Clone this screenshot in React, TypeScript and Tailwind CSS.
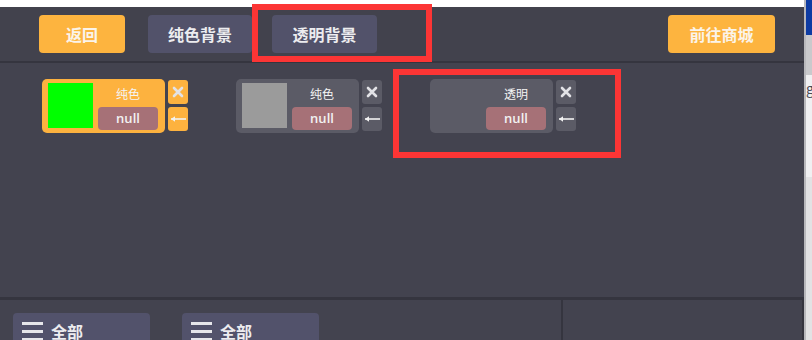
import React from "react";

const FONT = { fontFamily: '"Noto Sans CJK SC", "Noto Sans", sans-serif' };

function CloseIcon() {
  return (
    <svg width="12" height="12" viewBox="0 0 12 12">
      <path d="M2 2 L10 10 M10 2 L2 10" stroke="#e2e2e6" strokeWidth="2.6" strokeLinecap="round" />
    </svg>
  );
}

function ArrowIcon() {
  return (
    <svg width="16" height="8" viewBox="0 0 16 8">
      <path d="M1 4 L16 4" stroke="#f2f2f2" strokeWidth="1.6" />
      <path d="M1 4 L5 1.2 L5 6.8 Z" fill="#f2f2f2" />
    </svg>
  );
}

function Card({
  label,
  active,
  swatch,
}: {
  label: string;
  active?: boolean;
  swatch?: string;
}) {
  const bg = active ? "bg-[#fdb23f]" : "bg-[#5b5b66]";
  return (
    <div className="flex gap-[3px]">
      <div className={`flex h-[54px] w-[123px] rounded-[5px] ${bg} pl-[6px] pr-[7px]`}>
        {swatch ? (
          <div className="mt-[4px] h-[45px] w-[45px]" style={{ backgroundColor: swatch }} />
        ) : null}
        <div className="ml-auto flex w-[60px] flex-col items-center pt-[7px]">
          <div className="text-[12px] leading-[16px] text-[#f4f4f4]">{label}</div>
          <div
            className="mt-[5px] flex h-[23px] w-[60px] items-center justify-center rounded-[4px] bg-[#a67177] text-[13px] font-semibold text-[#f2f2f2]"
            style={{ fontFamily: '"Open Sans", "Noto Sans", sans-serif' }}
          >
            null
          </div>
        </div>
      </div>
      <div className="mt-[1px] flex flex-col gap-[3px]">
        <div className={`flex h-[24px] w-[20px] items-center justify-center rounded-[3px] ${bg}`}>
          <CloseIcon />
        </div>
        <div className={`flex h-[24px] w-[20px] items-center justify-center rounded-[3px] ${bg}`}>
          <ArrowIcon />
        </div>
      </div>
    </div>
  );
}

function MenuButton() {
  return (
    <div className="flex h-[40px] w-[137px] shrink-0 items-start rounded-t-[4px] bg-[#52526b] pl-[9px] pt-[9px]">
      <div className="flex w-[21px] flex-col gap-[5px]">
        <div className="h-[3px] bg-[#e6e6ea]" />
        <div className="h-[3px] bg-[#e6e6ea]" />
        <div className="h-[3px] bg-[#e6e6ea]" />
      </div>
      <div className="ml-[8px] mt-[1px] text-[16px] font-bold leading-[16px] text-[#ececef]">全部</div>
    </div>
  );
}

export default function App() {
  return (
    <div className="relative flex h-[340px] w-[812px] overflow-hidden bg-[#43434f]" style={FONT}>
      <div className="flex h-[340px] w-[804px] shrink-0 flex-col">
        <div className="h-[7px] shrink-0 bg-white" />
        <div className="flex h-[54px] shrink-0 items-center bg-[#42424d]">
          <div className="ml-[39px] flex h-[38px] w-[86px] items-center justify-center rounded-[4px] bg-[#fdb43f] text-[16px] font-bold text-[#fbf4ea]">
            返回
          </div>
          <div className="ml-[23px] flex h-[38px] w-[104px] items-center justify-center rounded-[4px] bg-[#52526a] text-[16px] font-bold text-[#ececef]">
            纯色背景
          </div>
          <div className="ml-[20px] flex h-[38px] w-[105px] items-center justify-center rounded-[4px] bg-[#52526a] text-[16px] font-bold text-[#ececef]">
            透明背景
          </div>
          <div className="ml-auto mr-[29px] flex h-[38px] w-[107px] items-center justify-center rounded-[4px] bg-[#fdb43f] text-[16px] font-bold text-[#fbf4ea]">
            前往商城
          </div>
        </div>
        <div className="h-[2px] shrink-0 bg-[#35353f]" />
        <div className="h-[234px] shrink-0 bg-[#43434f] pl-[42px] pt-[16px]">
          <div className="flex gap-[48px]">
            <Card label="纯色" active swatch="#00ff00" />
            <Card label="纯色" swatch="#9b9b9b" />
            <Card label="透明" />
          </div>
        </div>
        <div className="h-[3px] shrink-0 bg-[#35353f]" />
        <div className="flex min-h-0 flex-1 overflow-hidden">
          <div className="flex w-[561px] shrink-0 gap-[32px] overflow-hidden bg-[#43434f] pl-[13px] pt-[13px]">
            <MenuButton />
            <MenuButton />
          </div>
          <div className="w-[2px] shrink-0 bg-[#35353f]" />
          <div className="flex-1 bg-[#43434f]" />
          <div className="w-[2px] shrink-0 bg-[#35353f]" />
        </div>
      </div>
      <div className="flex w-[8px] shrink-0 flex-col border-l-[2px] border-[#b8b8bc]">
        <div className="h-[35px] shrink-0 bg-[#0d3ba3]" />
        <div className="h-[40px] shrink-0 bg-[#c9c9cc]" />
        <div className="relative h-[102px] shrink-0 overflow-hidden bg-[#f0f0f2]">
          <span className="absolute left-0 top-[4px] text-[14px] leading-[18px] text-[#4a4a55]">g</span>
        </div>
        <div className="flex-1 bg-[#e2e2e4]" />
      </div>

      <div className="pointer-events-none absolute left-[252px] top-[4px] h-[58px] w-[180px] border-[6px] border-[#fc3535]" />
      <div className="pointer-events-none absolute left-[393px] top-[69px] h-[89px] w-[228px] border-[6px] border-[#fc3535]" />
    </div>
  );
}
